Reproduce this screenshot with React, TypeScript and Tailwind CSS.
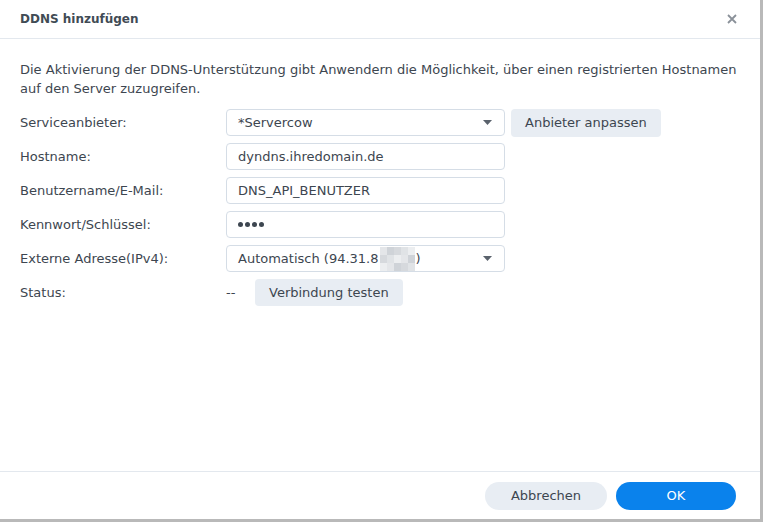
import React from "react";

const FONT = { fontFamily: '"DejaVu Sans", Verdana, sans-serif' };

const FIELD =
  "flex h-[27px] w-[279px] items-center rounded-[4px] border border-[#d5dde6] bg-white pl-[11px] pr-[12px] text-[13px] text-[#3d4650]";

function Caret() {
  return (
    <svg width="9" height="5" viewBox="0 0 9 5" className="ml-auto">
      <path d="M0 0h9L4.5 5z" fill="#5a626c" />
    </svg>
  );
}

function Row({ label, children }: { label: string; children: React.ReactNode }) {
  return (
    <div className="flex h-[27px] items-center">
      <div className="w-[206px] text-[13px] text-[#3d4650]">{label}</div>
      {children}
    </div>
  );
}

// pixelated patch covering part of the IP address
function Mosaic() {
  const shades = ["#e4e6e9", "#d6d9dd", "#eceef0", "#cfd3d8", "#e0e3e6"];
  return (
    <span className="mx-[1px] inline-grid h-[24px] grid-cols-5 grid-rows-3 align-middle">
      {Array.from({ length: 15 }).map((_, i) => (
        <span
          key={i}
          className="block h-[8px] w-[7px]"
          style={{ backgroundColor: shades[(i * 3 + Math.floor(i / 5)) % shades.length] }}
        />
      ))}
    </span>
  );
}

export default function App() {
  return (
    <div className="h-[522px] w-[763px] bg-[#b9b9b9]" style={FONT}>
      <div className="flex h-[519px] w-[760px] flex-col bg-white">
        <div className="flex h-[39px] items-center justify-between border-b border-[#e3e8ee] px-5">
          <span className="text-[12px] font-bold text-[#414b55]">DDNS hinzufügen</span>
          <svg width="10" height="10" viewBox="0 0 10 10" className="mr-[3px]">
            <path d="M1 1l8 8M9 1L1 9" stroke="#8a9199" strokeWidth="1.8" />
          </svg>
        </div>

        <div className="flex-1 px-5 pt-[21px]">
          <p className="mb-[11px] text-[13px] leading-[19px] text-[#3d4650]">
            Die Aktivierung der DDNS-Unterstützung gibt Anwendern die Möglichkeit, über einen
            registrierten Hostnamen auf den Server zuzugreifen.
          </p>

          <div className="flex flex-col gap-[7px]">
            <Row label="Serviceanbieter:">
              <div className={FIELD}>
                *Servercow
                <Caret />
              </div>
              <button className="ml-[6px] h-[28px] rounded-[4px] bg-[#e8edf3] px-[14px] text-[13px] text-[#3d4650]">
                Anbieter anpassen
              </button>
            </Row>
            <Row label="Hostname:">
              <div className={FIELD}>dyndns.ihredomain.de</div>
            </Row>
            <Row label="Benutzername/E-Mail:">
              <div className={FIELD}>DNS_API_BENUTZER</div>
            </Row>
            <Row label="Kennwort/Schlüssel:">
              <div className={FIELD}>
                <span className="flex gap-[2px]">
                  {[0, 1, 2, 3].map((i) => (
                    <span key={i} className="h-[5px] w-[5px] rounded-full bg-[#3d4650]" />
                  ))}
                </span>
              </div>
            </Row>
            <Row label="Externe Adresse(IPv4):">
              <div className={FIELD}>
                Automatisch (94.31.8
                <Mosaic />)
                <Caret />
              </div>
            </Row>
            <Row label="Status:">
              <span className="w-[29px] text-[13px] text-[#3d4650]">--</span>
              <button className="h-[27px] rounded-[4px] bg-[#e8edf3] px-[14px] text-[13px] text-[#3d4650]">
                Verbindung testen
              </button>
            </Row>
          </div>
        </div>

        <div className="flex h-[48px] items-center justify-end gap-[9px] border-t border-[#e3e8ee] pr-6">
          <button className="h-[28px] w-[122px] rounded-full bg-[#e8edf3] text-[13px] text-[#3d4650]">
            Abbrechen
          </button>
          <button className="h-[28px] w-[120px] rounded-full bg-[#0a82ec] text-[13px] text-white">
            OK
          </button>
        </div>
      </div>
    </div>
  );
}
